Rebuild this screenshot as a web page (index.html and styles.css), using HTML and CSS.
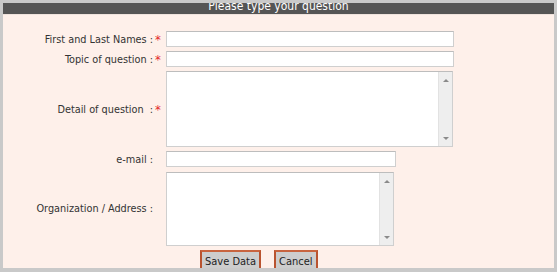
FILE: index.html
```html
<!DOCTYPE html>
<html lang="en">
<head>
  <meta charset="UTF-8" />
  <title>Please type your question</title>
  <link rel="stylesheet" href="styles.css">
</head>
<body>
  <div class="frame">
    <div class="titlebar">Please type your question</div>

    <form class="qform">
      <label class="lbl">First and Last Names :</label>
      <span class="req">*</span>
      <input type="text" class="field field-wide">

      <label class="lbl">Topic of question :</label>
      <span class="req">*</span>
      <input type="text" class="field field-wide">

      <label class="lbl">Detail of question &nbsp;:</label>
      <span class="req">*</span>
      <div class="area area-detail">
        <textarea></textarea>
        <div class="sbar"><span class="up"></span><span class="down"></span></div>
      </div>

      <label class="lbl">e-mail :</label>
      <span class="req"></span>
      <input type="text" class="field field-mail">

      <label class="lbl">Organization / Address :</label>
      <span class="req"></span>
      <div class="area area-org">
        <textarea></textarea>
        <div class="sbar"><span class="up"></span><span class="down"></span></div>
      </div>

      <span></span>
      <span></span>
      <div class="actions">
        <button type="button">Save Data</button>
        <button type="button">Cancel</button>
      </div>
    </form>
  </div>
</body>
</html>
```

FILE: styles.css
```css
body {
  margin: 0;
  padding: 3px 3px 0 3px;
  background: #c9c9c9;
  font-family: "DejaVu Sans Condensed", "Liberation Sans", sans-serif;
  color: #333;
  overflow: hidden;
}

.frame {
  height: 265px;
  background: #fef0ea;
  overflow: hidden;
}

.titlebar {
  height: 11px;
  line-height: 7px;
  background: #555;
  color: #fff;
  font-size: 12px;
  text-align: center;
  overflow: hidden;
  border-bottom: 1px solid #efe3dd;
}

.qform {
  display: grid;
  grid-template-columns: 150px 13px auto;
  align-items: center;
  row-gap: 4px;
  padding-top: 16px;
  font-size: 10.8px;
}

.lbl {
  text-align: right;
}

.req {
  color: #e42a2a;
  font-size: 13px;
  line-height: 11px;
  padding-left: 2px;
}

.field {
  box-sizing: border-box;
  height: 16px;
  margin: 0;
  border: 1px solid #cfcfcf;
  border-top-color: #bdbdbd;
  background: #fff;
  padding: 0 2px;
}

.field-wide { width: 288px; }
.field-mail { width: 230px; }

.area {
  display: flex;
  box-sizing: border-box;
  border: 1px solid #cfcfcf;
  border-top-color: #bdbdbd;
  background: #fff;
}

.area-detail { width: 287px; height: 76px; }
.area-org { width: 228px; height: 74px; margin-top: 1px; }

.area textarea {
  flex: 1;
  border: none;
  resize: none;
  outline: none;
  margin: 0;
  padding: 2px;
  background: #fff;
}

.sbar {
  width: 14px;
  background: #eeeeee;
  border-left: 1px solid #e2e2e2;
  display: flex;
  flex-direction: column;
  justify-content: space-between;
  align-items: center;
  padding: 7px 0 6px;
  box-sizing: border-box;
}

.sbar .up {
  border-left: 3px solid transparent;
  border-right: 3px solid transparent;
  border-bottom: 3px solid #8a8a8a;
}

.sbar .down {
  border-left: 3px solid transparent;
  border-right: 3px solid transparent;
  border-top: 3px solid #8a8a8a;
}

.actions {
  display: flex;
  gap: 13px;
  padding-left: 34px;
}

.actions button {
  height: 22px;
  margin: 0;
  padding: 0 3px;
  background: #cdcdcd;
  border: 2px solid #b9532f;
  border-top-color: #c8643f;
  font-family: inherit;
  font-size: 11px;
  color: #222;
}
```
